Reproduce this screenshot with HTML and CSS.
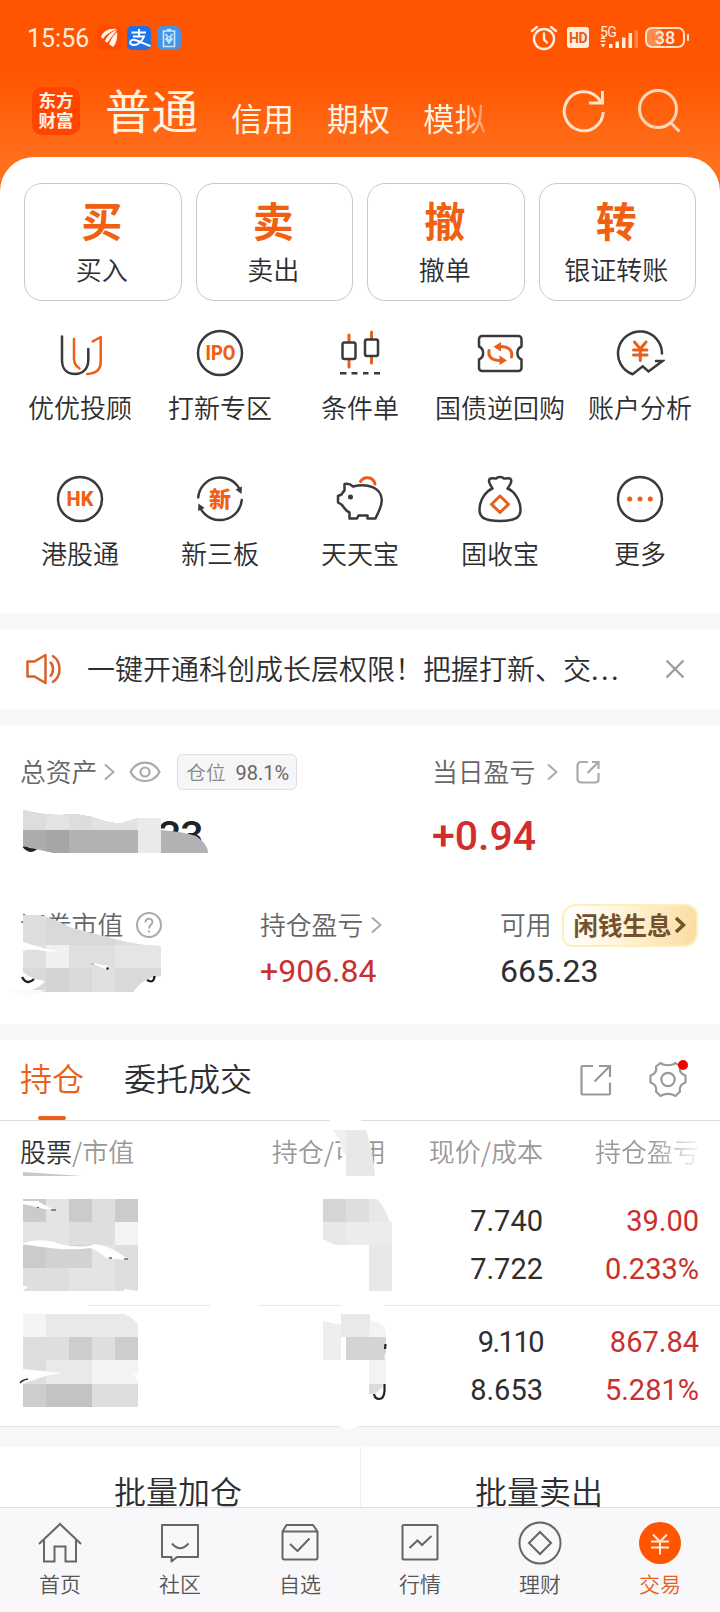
FILE: index.html
```html
<!DOCTYPE html>
<html lang="zh-CN">
<head>
<meta charset="utf-8">
<title>交易</title>
<link rel="stylesheet" href="styles.css">
</head>
<body>
<div class="screen">
  <header class="top">
    <div class="status">
      <span class="clock">15:56</span>
      <div class="apps">
        <svg width="24" height="24" viewBox="0 0 24 24"><rect width="24" height="24" rx="5" fill="#ff4a00"/><path d="M4 11C6 5 12 2 20 3C15 5 9 8 6 13ZM8 15C10 10 15 5 20 4C17 8 13 13 10 17ZM12 18C14 12 18 8 20 6C21 12 19 18 16 21Z" fill="#fff5e8"/></svg>
        <svg width="24" height="24" viewBox="0 0 24 24"><rect width="24" height="24" rx="5" fill="#1f72e8"/><path d="M4.500 6.500H19M12 3V10.500M6 10.500H17C15 16 10 19.500 6 19C1 18 3 13 8 14C13 15 17 18 23.500 20" fill="none" stroke="#fff" stroke-width="2"/></svg>
        <svg width="24" height="24" viewBox="0 0 24 24"><rect width="24" height="24" rx="6" fill="#4694e6"/><path d="M6.500 5H17.500V20.500H6.500ZM10 3.500H14M8.500 8L11 11L9 13L12 17L15 13L13 11L15.500 8M10 13L12 14L14 13" fill="none" stroke="#c8e6ff" stroke-width="1.600"/></svg>
      </div>
      <div class="signals">
        <svg width="28" height="26" viewBox="0 0 28 26" fill="none" stroke="#ffeedd" stroke-width="2.400" stroke-linecap="round"><circle cx="14" cy="14" r="10"/><path d="M14 8.500V14.500L17 17.500M2 6L7 2M21 2L26 6"/></svg>
        <span class="hd">HD</span>
        <span class="net"><span class="g5">5G</span><svg width="40" height="18" viewBox="0 0 40 18" fill="#ffeedd"><path d="M.5 7L3 3.500L5.500 7ZM.5 12L3 15.500L5.500 12ZM.5 8.500H5.500V10H.5Z"/><path d="M9 12h3.500v4H9zM15.500 9.500H19V16h-3.500zM22 5.500h3.500V16H22zM28.500 1H32v15h-3.500z"/><path d="M34.500-2H38V16h-3.500z" opacity=".3"/></svg></span>
        <span class="battery"><span>38</span></span>
      </div>
    </div>
    <nav class="modes">
      <div class="brand"><span>东方</span><span>财富</span></div>
      <b class="mode-main">普通</b>
      <span class="mode">信用</span><span class="mode">期权</span><span class="mode fade">模拟</span>
      <div class="tools">
        <svg width="46" height="46" viewBox="0 0 46 46" fill="none" stroke="#ffe4cc" stroke-width="3"><path d="M42.200 24A19.500 19.500 0 1 1 37 10L40 14M28 15H41.500V3"/></svg>
        <svg width="46" height="46" viewBox="0 0 46 46" fill="none" stroke="#ffd5b8" stroke-width="3"><circle cx="21" cy="21" r="18.500"/><path d="M33.500 34.500L42.500 43.500"/></svg>
      </div>
    </nav>
  </header>

  <main class="sheet">
    <section class="cards">
      <div class="card"><b>买</b><span>买入</span></div>
      <div class="card"><b>卖</b><span>卖出</span></div>
      <div class="card"><b>撤</b><span>撤单</span></div>
      <div class="card"><b>转</b><span>银证转账</span></div>
    </section>
    <section class="grid">
      <div class="item"><svg class="ico" viewBox="0 0 50 50"><path d="M7 8.500V32C7 41 12 46 20 46C28.500 46 33.300 40 33.300 32V21"/><path class="o" d="M19 11V31C19 36 21 38 24.500 40.500M37.700 13.500L45.700 9V34C45.700 42 41 45.500 32.300 46"/></svg><span>优优投顾</span></div>
      <div class="item"><svg class="ico" viewBox="0 0 50 50"><circle cx="25" cy="25" r="22"/><text x="25.500" y="32" font-size="20" textLength="30" lengthAdjust="spacingAndGlyphs">IPO</text></svg><span>打新专区</span></div>
      <div class="item"><svg class="ico" viewBox="0 0 50 50"><path class="o thick" d="M14 7V14M14 32V39M36.500 4V11M36.500 29V35"/><rect x="7.500" y="14.500" width="13" height="16.500" rx="2"/><rect x="30" y="11.500" width="13" height="16.500" rx="2"/><path d="M5 45.300H11.500M16.500 45.300H22.500M28 45.300H33.500M39 45.300H45" stroke-linecap="butt"/></svg><span>条件单</span></div>
      <div class="item"><svg class="ico" viewBox="0 0 50 50"><path d="M7 8H43.500A3 3 0 0 1 46.500 11V18.500C41 21 41 29 46.500 31.500V40A3 3 0 0 1 43.500 43H7A3 3 0 0 1 4 40V31.500C9.500 29 9.500 21 4 18.500V11A3 3 0 0 1 7 8Z"/><path class="o thick" d="M36.500 29C38 22 33 18 24 18.500M14 22.500C13 29 17 33 27 32.500"/><path class="fo" d="M18.500 18.800L26 14V23.500ZM32 32.500L24.500 27.500V37Z"/></svg><span>国债逆回购</span></div>
      <div class="item"><svg class="ico" viewBox="0 0 50 50"><path d="M47 25.500A22 22 0 1 0 17.700 46.200L27.700 38.300L33.500 43.500L47.500 33H41" stroke-linejoin="miter"/><path class="o thick" d="M19.500 14L25.300 21L31 14M25.300 21V32.500M18.500 22H32M18.500 27H32"/></svg><span>账户分析</span></div>
      <div class="item"><svg class="ico" viewBox="0 0 50 50"><circle cx="25" cy="25" r="22"/><text x="25" y="32" font-size="20">HK</text></svg><span>港股通</span></div>
      <div class="item"><svg class="ico" viewBox="0 0 50 50"><path d="M3.200 23.500A22 22 0 0 1 44.500 15M46.800 26A22 22 0 0 1 5.500 34.500"/><path class="fd" d="M40.500 15.500L47 12.500L46.500 20ZM9.500 34L3 37L3.500 29.500Z"/><text x="25" y="33" font-size="22">新</text></svg><span>新三板</span></div>
      <div class="item"><svg class="ico" viewBox="0 0 50 50"><path d="M9.500 10C13 9.500 16 10.500 18 12.500C32 9 46.500 13 46.800 26C47 33 43 38 40.500 44.500H32.500V41.500H23.500L22 44.500H14.500V38.500C10 36.500 8 32 6.500 30.500L3 28.500V22L6.500 20.500C7.500 19 8 18 9.500 16.500Z"/><circle class="fd" cx="15.500" cy="23" r="2.500"/><path class="o thick" d="M25.500 7.500C28 2.500 38 1.500 40 10"/></svg><span>天天宝</span></div>
      <div class="item"><svg class="ico" viewBox="0 0 50 50"><path d="M17.500 14.500C15.500 11.500 12 6 15.500 4.500C18 4 20 4.500 21 4.500C23 2.500 27 2.500 29 4.500C30 4.500 33 4 35 4.500C38 6 35 11.500 32.500 14.500C39 17 45.500 26 45.500 36C45.500 43 41 47 25 47C9 47 4.500 43 4.500 36C4.500 26 11 17 17.500 14.500Z"/><path class="o thick" d="M25 22L33.500 30.300L25 38.500L16.500 30.300Z"/></svg><span>固收宝</span></div>
      <div class="item"><svg class="ico" viewBox="0 0 50 50"><circle cx="25" cy="25" r="22"/><g class="fo"><circle cx="14.700" cy="25" r="2.500"/><circle cx="25" cy="25" r="2.500"/><circle cx="35.300" cy="25" r="2.500"/></g></svg><span>更多</span></div>
    </section>
  </main>

  <section class="notice">
    <svg width="36" height="32" viewBox="0 0 36 32" fill="none" stroke="#d8622a" stroke-width="2.500"><path d="M1.500 8.500H8.500L19.500 2V30L8.500 23.500H1.500ZM24 9C28 12 28 20 24 23.500M26 2.500C36 8 36 24 26 29.500" stroke-linejoin="round"/></svg>
    <p>一键开通科创成长层权限！把握打新、交<span>...</span></p>
    <svg class="close" width="20" height="20" viewBox="0 0 20 20"><path d="M1.500 1.500L18.500 18.500M18.500 1.500L1.500 18.500"/></svg>
  </section>

  <section class="assets">
    <div class="assets-a">
      <div class="total">
        <div class="label"><span>总资产</span><svg class="chev" viewBox="0 0 12 18"><path d="M2 1.500L10.500 9L2 16.500"/></svg>
          <svg class="eye" width="32" height="22" viewBox="0 0 32 22"><path d="M1.500 11C8-1.500 24-1.500 30.500 11C24 23 8 23 1.500 11Z"/><circle cx="16" cy="11" r="4.500"/></svg>
          <span class="ratio">仓位<i>98.1%</i></span></div>
        <div class="big tail">33</div>
      </div>
      <div class="today">
        <div class="label"><span>当日盈亏</span><svg class="chev" viewBox="0 0 12 18"><path d="M2 1.500L10.500 9L2 16.500"/></svg>
          <svg class="share" width="24" height="24" viewBox="0 0 24 24"><path d="M12 2H5A3.500 3.500 0 0 0 1.500 5.500V19A3.500 3.500 0 0 0 5 22.500H19.500A3 3 0 0 0 22.500 19.500V13M16 2H22.500V9M22 2.500L11.500 13"/></svg></div>
        <div class="big red">+0.94</div>
      </div>
    </div>
    <div class="assets-b">
      <div><div class="label"><span>证券市值</span><svg class="help" width="28" height="28" viewBox="0 0 28 28"><circle cx="14" cy="14" r="12"/><path d="M10.500 11.500C10.500 6.500 17.500 6.500 17.500 11C17.500 13.500 14 13.500 14 17.500M14 19.500V21.500"/></svg></div></div>
      <div><div class="label"><span>持仓盈亏</span><svg class="chev" viewBox="0 0 12 18"><path d="M2 1.500L10.500 9L2 16.500"/></svg></div><div class="mid red">+906.84</div></div>
      <div><div class="label"><span>可用</span><b class="idle">闲钱生息<svg width="12" height="18" viewBox="0 0 12 18"><path d="M2 2L9.500 9L2 16"/></svg></b></div><div class="mid">665.23</div></div>
    </div>
    <svg class="mask mask-a" width="240" height="200" viewBox="0 800 240 200">
      <clipPath id="m1"><path d="M23 810Q42 815 62 815Q70 812 92 817Q110 824 122 823L138 818H161V830Q185 832 196 836Q208 844 208 853H54L23 846Z"/></clipPath>
      <path d="M24 846Q30 853 36 848" stroke="#222" stroke-width="3.500" fill="none"/>
      <g clip-path="url(#m1)"><path d="M23 800h190v55H23z" fill="#b2b2b2"/><path d="M23 800h23v30H23zM69 800h23v30H69z" fill="#ddd"/><path d="M46 800h23v30H46zM92 800h46v30H92z" fill="#e3e3e3"/><path d="M138 800h23v55H138z" fill="#eaeaea"/><path d="M46 830h23v25H46z" fill="#a6a6a6"/><path d="M23 830h23v25H23z" fill="#acacac"/></g>
      <clipPath id="m2"><path d="M23 915H39Q54 918 69 927L115 939Q135 945 161 946V976Q148 977 140 984L133 992H26Q40 988 45 981Q30 979 23 972Z"/></clipPath>
      <g clip-path="url(#m2)"><path d="M20 910h145v85H20z" fill="#d9d9d9"/><path d="M23 915h23v30H23zM115 930h23v15H115z" fill="#dedede"/><path d="M23 945h23v23H23zM69 945h46v23H69z" fill="#dfdfdf"/><path d="M46 945h23v23H46z" fill="#f0f0f0"/><path d="M115 945h46v23H115z" fill="#e5e5e5"/><path d="M92 968h23v24H92z" fill="#e0e0e0"/><path d="M46 968h23v24H46z" fill="#d4d4d4"/></g>
      <path d="M23 942Q45 949 60 952L45 951Q31 948 23 951ZM88 962L108 966V970Z" fill="#fff"/><path d="M91 963.500L94 964" stroke="#777" stroke-width=".7"/><circle cx="107.500" cy="968.500" r="1.300" fill="#222"/>
      <path d="M22 977Q27 986 34 979M147 980Q154 984 154.500 976" stroke="#222" stroke-width="2.400" fill="none"/>
      <path d="M8 990L46 990Q35 995 24 996Z" transform="translate(0 0)" fill="#fafafa"/>
    </svg>
  </section>

  <section class="holdings">
    <div class="tabs">
      <div class="tab on">持仓</div><div class="tab">委托成交</div>
      <div class="tab-tools">
        <svg width="32" height="32" viewBox="0 0 32 32"><path d="M13 2H2.500A1 1 0 0 0 1.500 3V29.500A1 1 0 0 0 2.500 30.500H29A1 1 0 0 0 30 29.500V18.500M19 2H30V13M30 2L14.500 17.500"/></svg>
        <svg width="40" height="40" viewBox="0 0 40 40"><path d="M12.500 3L15 4.500Q20 6 25 4.500L27.500 3L32 6.500C31 11 33 14 37.500 15.500V22.500C33 24 31 27 32 31.500L27.500 36L25 34.800Q20 33 15 34.800L12.500 36L8 31.500C9 27 7 24 2.500 22.500V15.500C7 14 9 11 8 6.500Z" stroke-linejoin="round"/><circle cx="20" cy="19.500" r="6.700"/><circle cx="35" cy="5" r="5" fill="#f00000" stroke="none"/></svg>
      </div>
    </div>
    <div class="row head"><span><em>股票</em>/市值</span><span>持仓/可用</span><span>现价/成本</span><span class="fade2">持仓盈亏</span></div>
    <div class="row pos"><span></span><span></span><span>7.740<br>7.722</span><span class="red">39.00<br>0.233%</span></div>
    <div class="row pos second"><span></span><span></span><span><span class="ones">9.110</span><br>8.653</span><span class="red">867.84<br>5.281%</span></div>
    <svg class="mask mask-b" width="400" height="325" viewBox="0 1110 400 325">
      <g fill="#fff"><path d="M330 1118h31v4H330zM0 1303h88v4H0zM210 1303h49v4H210zM341 1303h44v4H341zM338 1425h22q-10 8-22 0z"/><path d="M338 1128H368L374 1172H344Z"/></g>
      <path d="M332 1130H346V1155Q340 1150 340 1142Q338 1135 332 1130Z" fill="#f0f0f0"/><path d="M346 1130H366Q373 1150 375 1176H346Z" fill="#e8e8e8"/><path d="M23 1172L82 1176H23Z" fill="#c8c8c8"/>
      <path d="M23 1199h115v92H23z" fill="#dedede"/>
      <g fill="#cbcbcb"><path d="M23 1199h23v23H23zM69 1199h23v23H69zM115 1199h23v23h-23zM23 1245h23v23H23z"/></g>
      <g fill="#e4e4e4"><path d="M46 1199h23v23H46zM23 1222h46v23H23zM92 1245h23v46H92zM69 1268h23v23H69z"/></g>
      <path d="M46 1245h46v23H46z" fill="#d2d2d2"/><path d="M115 1222h23v23h-23z" fill="#f3f3f3"/>
      <g fill="#fff"><path d="M23 1201L38 1201Q43 1205 55 1210Q45 1210 36 1207L23 1204ZM23 1243Q42 1237 60 1244Q84 1249 95 1244Q112 1246 129 1260Q112 1259 106 1258Q96 1249 90 1248Q65 1252 23 1244ZM23 1291L28 1286 23 1286ZM124 1289L138 1291H124Z"/></g>
      <path d="M51 1210H56M109 1258H112M124 1259H128" stroke="#222" stroke-width="1"/><circle cx="38" cy="1207.500" r=".8" fill="#333"/>
      <path d="M323 1199H377Q390 1213 392 1235V1291H369V1245H335L323 1239Z" fill="#e8e8e8"/><path d="M323 1199h23v23h-23z" fill="#d5d5d5"/><path d="M346 1199h23v23h-23z" fill="#dedede"/><path d="M346 1222h46v23h-46z" fill="#ececec"/>
      <path d="M23 1314H124Q132 1317 138 1324V1407H23Z" fill="#e9e9e9"/>
      <path d="M23 1314h23v23H23zM92 1360h46v24H92z" fill="#f4f4f4"/><path d="M23 1337h46v23H23zM92 1337h23v23H92zM23 1360h23v24H23zM92 1384h46v23H92z" fill="#dedede"/><path d="M69 1337h23v23H69zM115 1337h23v23h-23zM23 1384h23v23H23z" fill="#cdcdcd"/><path d="M46 1384h46v23H46z" fill="#c3c3c3"/>
      <path d="M23 1369L62 1373Q45 1375 34 1380L23 1384ZM138 1374L133 1375L138 1380Z" fill="#fff"/><path d="M20 1383Q22 1380 28 1379" stroke="#333" stroke-width="1.500" fill="none"/>
      <path d="M323 1321L341 1325V1360H323Z" fill="#eee"/><path d="M341 1314h29v23h-29z" fill="#e9e9e9"/><path d="M370 1320Q386 1322 386 1335V1384Q380 1394 369 1394V1337Z" fill="#f3f3f3"/><path d="M346 1337h40v15q-3 4-1 8h-39z" fill="#d4d4d4"/><path d="M369 1384H383Q379 1394 369 1394Z" fill="#dcdcdc"/>
      <path d="M384.500 1384V1391Q384 1399 379 1399Q375 1399 374 1394M385.500 1344L385 1349" stroke="#222" stroke-width="2.200" fill="none"/>
    </svg>
  </section>

  <section class="batch"><div>批量加仓</div><div>批量卖出</div></section>

  <footer class="nav">
    <div class="tabitem"><svg viewBox="0 0 44 44"><path d="M1 23L22 3L43 23M6 19V40.500H16.500V25.500H27.500V40.500H38V19"/></svg><span>首页</span></div>
    <div class="tabitem"><svg viewBox="0 0 44 44"><path d="M4 4H40V36H19L13.500 40.500V36H4ZM14 22.500Q22 32 30.500 22.500" stroke-linejoin="round"/></svg><span>社区</span></div>
    <div class="tabitem"><svg viewBox="0 0 44 44"><path d="M4.500 10.500L8.500 4H35L39.500 10.500M4.500 10.500H39.500V36.500A2 2 0 0 1 37.500 38.500H6.500A2 2 0 0 1 4.500 36.500ZM12 23L19.500 30L31.500 17.500" stroke-linejoin="round"/></svg><span>自选</span></div>
    <div class="tabitem"><svg viewBox="0 0 44 44"><rect x="4.500" y="4" width="35" height="34.500" rx="1"/><path d="M11.500 27L19.500 19.500L24 24L33.500 15"/></svg><span>行情</span></div>
    <div class="tabitem"><svg viewBox="0 0 44 44"><circle cx="22" cy="22" r="20.500"/><path d="M22 11L33 22L22 33L11 22Z"/></svg><span>理财</span></div>
    <div class="tabitem active"><svg viewBox="0 0 44 44"><circle cx="22" cy="22" r="21" fill="#ff5500" stroke="none"/><path d="M15 13.500L22 20.500L29 13.500M22 20.500V33.500M13 20.500H31M13 26.500H31" stroke="#ffe9d8"/></svg><span>交易</span></div>
  </footer>
</div>
</body>
</html>
```
FILE: styles.css
```css
* { box-sizing: border-box; }
body { margin: 0; }
.screen { width: 720px; height: 1612px; overflow: hidden; display: flex; flex-direction: column; background: #f7f7fa; color: #2e2e30; font-family: "Noto Sans CJK SC", sans-serif; font-weight: 350; }
svg { display: block; flex: none; }
.red { color: #c9302f; }

.top { height: 194px; flex: none; background: linear-gradient(#ff5500 0, #ff5500 72px, #ff6f1c 157px); }
.status { height: 74px; padding: 0 29px 0 27px; display: flex; align-items: center; color: #ffeedd; font-family: Roboto, sans-serif; }
.clock { font-size: 25px; font-weight: 400; line-height: 30px; width: 70px; padding-top: 3px; }
.apps { display: flex; gap: 6px; padding-top: 2px; }
.signals { margin-left: auto; display: flex; align-items: center; padding-top: 1px; }
.hd { width: 22px; height: 21px; margin: 0 11px 0 9px; border-radius: 3px; background: #ffeedd; color: #e85a14; font-size: 14px; font-weight: 700; line-height: 22px; text-align: center; letter-spacing: -.5px; }
.net { width: 40px; height: 22px; margin-right: 5px; display: flex; flex-direction: column; }
.g5 { font-size: 14px; font-weight: 400; line-height: 11px; height: 5px; letter-spacing: -.5px; }
.net svg { overflow: visible; }
.battery { width: 40px; height: 21px; border: 2px solid #ffe0c8; border-radius: 7px; background: linear-gradient(90deg, #ff8a4a 38%, transparent 38%); position: relative; font-size: 18px; font-weight: 500; line-height: 18px; text-align: center; margin-right: 6px; }
.battery::after { content: ""; position: absolute; right: -6px; top: 5px; width: 2.500px; height: 7px; background: #ffe0c8; border-radius: 1px; }

.modes { height: 83px; padding: 0 37px 0 32px; display: flex; align-items: flex-start; color: #fff3e4; font-weight: 400; }
.brand { width: 48px; height: 48px; margin-top: 13px; border-radius: 10px; background: #ff4500; display: grid; grid-template-rows: 20px 20px; padding-top: 3px; font-size: 17.500px; font-weight: 700; line-height: 20px; text-align: center; }
.mode-main { margin-left: 25px; font-size: 46.500px; line-height: 60px; font-weight: 400; margin-top: 5px; margin-right: 33px; }
.mode { font-size: 31.500px; line-height: 40px; margin-right: 33px; margin-top: 23px; }
.fade { margin-right: 0; background: linear-gradient(90deg, #fff3e4 60%, rgba(255,243,228,.3)); background-clip: text; -webkit-background-clip: text; color: transparent; }
.tools { margin-left: auto; display: flex; gap: 30px; padding-top: 14px; }

.sheet { height: 456px; margin-top: -37px; flex: none; background: #fff; border-radius: 34px 34px 0 0; padding-top: 26px; }
.cards { display: grid; grid-template-columns: repeat(4, 1fr); gap: 14px; padding: 0 24px; }
.card { height: 118px; border: 1px solid #c8c8ca; border-radius: 18px; display: flex; flex-direction: column; align-items: center; padding-right: 2px; }
.card b { font-size: 41px; line-height: 52px; margin-top: 9px; color: #f06010; font-weight: 700; }
.card span { font-size: 26px; line-height: 36px; margin-top: 6px; }
.grid { display: grid; grid-template-columns: repeat(5, 140px); grid-auto-rows: 146px; padding: 0 10px; margin-top: 27px; }
.item { display: flex; flex-direction: column; align-items: center; }
.item span { font-size: 26px; line-height: 36px; margin-top: 11px; white-space: nowrap; }
.ico { width: 50px; height: 50px; fill: none; stroke: #3a3a3c; stroke-width: 2.500; stroke-linecap: round; stroke-linejoin: round; }
.ico .o { stroke: #e8601c; }
.ico .thick { stroke-width: 3; }
.ico .fo { fill: #e8601c; stroke: none; }
.ico .fd { fill: #3a3a3c; stroke: none; }
.ico text { fill: #f06010; stroke: none; font-family: Roboto, "Noto Sans CJK SC", sans-serif; font-weight: 800; text-anchor: middle; }

.notice { height: 80px; margin-top: 16px; flex: none; background: #fff; display: flex; align-items: center; padding: 0 35px 0 26px; }
.notice p { margin: -2px auto 0 25px; font-size: 28px; line-height: 40px; white-space: nowrap; }
.notice p span { letter-spacing: 2.500px; }
.close, .chev, .eye, .share, .help, .tab-tools svg { fill: none; stroke: #999; stroke-width: 2.200; }

.assets { height: 299px; margin-top: 16px; flex: none; background: #fff; position: relative; padding: 29px 21px 0 20px; }
.assets-a { display: grid; grid-template-columns: 412px 1fr; height: 153px; }
.assets-b { display: grid; grid-template-columns: 240px 240px 1fr; }
.label { height: 36px; display: flex; align-items: center; font-size: 25.800px; line-height: 36px; color: #666; white-space: nowrap; }
.label > span:first-child { margin-top: -3px; }
.chev { width: 12px; height: 18px; margin-left: 7px; stroke: #aaa; stroke-width: 2; }
.total .chev { margin-left: 6px; }
.eye { margin-left: 14px; stroke: #aaa; }
.share { margin-left: 18px; stroke: #aaa; }
.today .chev { margin-left: 11px; }
.ratio { width: 120px; height: 36px; margin-left: 16px; border: 1px solid #ddd; border-radius: 6px; background: #f6f6f9; font-size: 19.500px; line-height: 33px; color: #888; display: flex; padding-left: 8px; }
.ratio i { font: 400 20px/36px Roboto, sans-serif; color: #666; margin-left: 10px; }
.big { font: 500 41px/48px Roboto, sans-serif; margin-top: 22px; color: #c9302f; }
.red.big { color: #d12d2d; }
.tail { color: #222; padding-left: 138px; letter-spacing: -1px; }
.mid { font: 400 32px/40px Roboto, sans-serif; margin-top: 8px; }
.help { margin-left: 12px; stroke: #aaa; stroke-width: 2; }
.idle { width: 136px; height: 43px; margin-left: 10px; border: 2px solid #fdeebb; border-radius: 14px 12px 14px 10px; background: linear-gradient(100deg, #fff 5%, #fff4d6 45%, #fbdc9f); display: flex; align-items: center; justify-content: center; font-size: 24.500px; font-weight: 700; line-height: 36px; color: #75502f; }
.idle svg { fill: none; stroke: #75502f; stroke-width: 3.500; margin-left: 2px; }
.mask { position: absolute; left: 0; fill: none; }
.mask-a { top: 75px; }
.mask-b { top: 70px; }

.holdings { height: 387px; margin-top: 16px; flex: none; background: #fff; position: relative; border-bottom: 1px solid #e4e4e6; }
.tabs { height: 81px; border-bottom: 1px solid #ddd; display: flex; padding: 0 32px 0 20px; align-items: stretch; }
.tab { font-size: 32px; line-height: 74px; margin-right: 40px; display: flex; flex-direction: column; align-items: center; }
.tab.on { color: #e8601c; }
.tab.on::after { content: ""; width: 28px; height: 4px; border-radius: 2px; background: #e8601c; margin-top: 2px; }
.tab-tools { margin-left: auto; display: flex; gap: 36px; align-items: center; padding-bottom: 1px; }
.row { display: grid; grid-template-columns: 200px 166px 157px 156px; padding-left: 20px; text-align: right; }
.row > :first-child { text-align: left; }
.head { height: 62px; font-size: 26px; line-height: 59px; color: #999; }
.head em { font-style: normal; color: #333; }
.fade2 { background: linear-gradient(90deg, #999 70%, #eee 98%); background-clip: text; -webkit-background-clip: text; color: transparent; }
.pos { height: 123px; border-bottom: 1px solid #e6e6e8; font: 400 29px/48px Roboto, sans-serif; padding-top: 14px; }
.second { border: 0; height: 120px; padding-top: 12px; }
.ones { letter-spacing: -1.500px; }

.batch { height: 60px; margin-top: 20px; flex: none; background: #fff; display: grid; grid-template-columns: 1fr 1fr; text-align: center; font-size: 32px; line-height: 32px; }
.batch div { height: 60px; padding: 27px 4px 0 0; }
.batch div + div { border-left: 1px solid #eee; padding-right: 3px; }
.nav { height: 105px; flex: none; display: grid; grid-template-columns: repeat(6, 1fr); background: #f8f8fa; border-top: 1px solid #ddd; }
.tabitem { display: flex; flex-direction: column; align-items: center; padding-top: 13px; font-size: 21px; line-height: 30px; color: #555; }
.tabitem svg { width: 44px; height: 44px; fill: none; stroke: #666; stroke-width: 2; }
.tabitem span { margin-top: 3px; }
.active { color: #e8601c; }
```
